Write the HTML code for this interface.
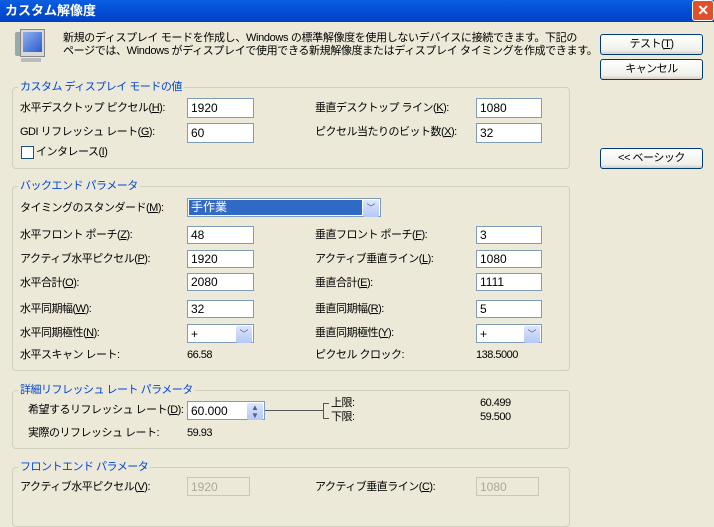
<!DOCTYPE html>
<html><head><meta charset="utf-8"><style>
*{margin:0;padding:0;box-sizing:border-box}
body{width:714px;height:504px;overflow:hidden;background:#ECE9D8;font-family:"Liberation Sans","Noto Sans CJK JP",sans-serif;font-size:11px;letter-spacing:-0.5px;color:#000;position:relative}
.a{position:absolute;white-space:nowrap;line-height:14px}
.tb{position:absolute;left:0;top:0;width:714px;height:22px;background:linear-gradient(#0A5FE0,#0550D8 40%,#0046C8 85%,#0040B8)}
.g{position:absolute;left:12px;width:558px;border:1px solid #D0D0BF;border-radius:4px}
.gt{position:absolute;color:#0046D5;background:#ECE9D8;padding:0 2px;line-height:14px;white-space:nowrap}
.i{position:absolute;background:#fff;border:1px solid #7F9DB9;height:20px;padding:2px 3px;line-height:14px;font-size:12px;letter-spacing:0}
.d{color:#ACA899;border-color:#C9C7BA;background:#ECE9D8}
.b{position:absolute;left:600px;width:103px;height:21px;border:1px solid #003C74;border-radius:3px;background:linear-gradient(#fff,#F0F0EA 80%,#D6D0C5);text-align:center;line-height:19px}
.dd{position:absolute;width:16px;height:17px;top:1px;right:1px;background:linear-gradient(#DCE6FC,#B4C8F6);border-radius:2px;color:#4D6185;font-size:9px;text-align:center;line-height:17px}
</style></head><body>
<div class="tb"></div>
<div class="a" style="left:5px;top:4px;color:#fff;font-weight:bold;font-size:13px;letter-spacing:0">カスタム解像度</div>
<div style="position:absolute;left:692px;top:0;width:22px;height:21px;background:#E0502A;border:1px solid #fff;border-radius:3px;color:#fff;font-weight:bold;text-align:center;line-height:19px;font-size:14px">✕</div>
<div style="position:absolute;left:15px;top:32px;width:8px;height:24px;background:#9AA;border-radius:2px"></div>
<div style="position:absolute;left:20px;top:29px;width:25px;height:28px;background:#D8D8D8;border:1px solid #888"></div>
<div style="position:absolute;left:23px;top:32px;width:19px;height:20px;background:linear-gradient(135deg,#8FB0F0,#2B5CD0)"></div>
<div style="position:absolute;left:21px;top:58px;width:20px;height:4px;background:#BBB"></div>
<div class="a" style="left:63px;top:31px;letter-spacing:-0.35px">新規のディスプレイ モードを作成し、Windows の標準解像度を使用しないデバイスに接続できます。下記の</div>
<div class="a" style="left:63px;top:44px;letter-spacing:-0.35px">ページでは、Windows がディスプレイで使用できる新規解像度またはディスプレイ タイミングを作成できます。</div>
<div class="b" style="top:34px">テスト(<u>T</u>)</div>
<div class="b" style="top:59px">キャンセル</div>
<div class="b" style="top:148px">&lt;&lt; ベーシック</div>

<div class="g" style="top:87px;height:82px"></div>
<div class="gt" style="left:18px;top:80px">カスタム ディスプレイ モードの値</div>
<div class="a" style="left:20px;top:101px">水平デスクトップ ピクセル(<u>H</u>):</div>
<div class="i" style="left:187px;top:98px;width:67px">1920</div>
<div class="a" style="left:315px;top:101px">垂直デスクトップ ライン(<u>K</u>):</div>
<div class="i" style="left:476px;top:98px;width:66px">1080</div>
<div class="a" style="left:20px;top:125px">GDI リフレッシュ レート(<u>G</u>):</div>
<div class="i" style="left:187px;top:123px;width:67px">60</div>
<div class="a" style="left:315px;top:125px">ピクセル当たりのビット数(<u>X</u>):</div>
<div class="i" style="left:476px;top:123px;width:66px">32</div>
<div style="position:absolute;left:21px;top:146px;width:13px;height:13px;border:1px solid #1C5180;background:#fff"></div>
<div class="a" style="left:36px;top:145px">インタレース(<u>I</u>)</div>

<div class="g" style="top:186px;height:185px"></div>
<div class="gt" style="left:18px;top:179px">バックエンド パラメータ</div>
<div class="a" style="left:20px;top:201px">タイミングのスタンダード(<u>M</u>):</div>
<div class="i" style="left:187px;top:198px;width:194px;height:19px;padding:1px"><div style="background:#316AC5;color:#fff;width:173px;height:15px;line-height:15px;padding-left:2px;outline:1px dotted #fff">手作業</div><div class="dd">﹀</div></div>
<div class="a" style="left:20px;top:228px">水平フロント ポーチ(<u>Z</u>):</div>
<div class="i" style="left:187px;top:226px;width:67px;height:18px;padding-top:1px">48</div>
<div class="a" style="left:315px;top:228px">垂直フロント ポーチ(<u>F</u>):</div>
<div class="i" style="left:476px;top:226px;width:66px;height:18px;padding-top:1px">3</div>
<div class="a" style="left:20px;top:252px">アクティブ水平ピクセル(<u>P</u>):</div>
<div class="i" style="left:187px;top:250px;width:67px;height:18px;padding-top:1px">1920</div>
<div class="a" style="left:315px;top:252px">アクティブ垂直ライン(<u>L</u>):</div>
<div class="i" style="left:476px;top:250px;width:66px;height:18px;padding-top:1px">1080</div>
<div class="a" style="left:20px;top:276px">水平合計(<u>O</u>):</div>
<div class="i" style="left:187px;top:273px;width:67px;height:18px;padding-top:1px">2080</div>
<div class="a" style="left:315px;top:276px">垂直合計(<u>E</u>):</div>
<div class="i" style="left:476px;top:273px;width:66px;height:18px;padding-top:1px">1111</div>
<div class="a" style="left:20px;top:302px">水平同期幅(<u>W</u>):</div>
<div class="i" style="left:187px;top:300px;width:67px;height:18px;padding-top:1px">32</div>
<div class="a" style="left:315px;top:302px">垂直同期幅(<u>R</u>):</div>
<div class="i" style="left:476px;top:300px;width:66px;height:18px;padding-top:1px">5</div>
<div class="a" style="left:20px;top:326px">水平同期極性(<u>N</u>):</div>
<div class="i" style="left:187px;top:324px;width:67px;height:19px;padding-top:2px">+<div class="dd">﹀</div></div>
<div class="a" style="left:315px;top:326px">垂直同期極性(<u>Y</u>):</div>
<div class="i" style="left:476px;top:324px;width:66px;height:19px;padding-top:2px">+<div class="dd">﹀</div></div>
<div class="a" style="left:20px;top:348px">水平スキャン レート:</div>
<div class="a" style="left:187px;top:348px">66.58</div>
<div class="a" style="left:315px;top:348px">ピクセル クロック:</div>
<div class="a" style="left:476px;top:348px">138.5000</div>

<div class="g" style="top:390px;height:59px"></div>
<div class="gt" style="left:18px;top:383px">詳細リフレッシュ レート パラメータ</div>
<div class="a" style="left:28px;top:403px">希望するリフレッシュ レート(<u>D</u>):</div>
<div class="i" style="left:187px;top:401px;width:78px;height:19px;padding-top:2px">60.000<div class="dd" style="font-size:8px;line-height:8px;padding-top:1px">▲<br>▼</div></div>
<div style="position:absolute;left:265px;top:410px;width:58px;height:1px;background:#555"></div>
<div style="position:absolute;left:323px;top:403px;width:6px;height:16px;border:1px solid #555;border-right:none"></div>
<div class="a" style="left:331px;top:396px">上限:</div>
<div class="a" style="left:331px;top:410px">下限:</div>
<div class="a" style="left:480px;top:396px">60.499</div>
<div class="a" style="left:480px;top:410px">59.500</div>
<div class="a" style="left:28px;top:426px">実際のリフレッシュ レート:</div>
<div class="a" style="left:187px;top:426px">59.93</div>

<div class="g" style="top:467px;height:60px"></div>
<div class="gt" style="left:18px;top:460px">フロントエンド パラメータ</div>
<div class="a" style="left:20px;top:480px">アクティブ水平ピクセル(<u>V</u>):</div>
<div class="i d" style="left:187px;top:477px;width:63px;height:19px">1920</div>
<div class="a" style="left:315px;top:480px">アクティブ垂直ライン(<u>C</u>):</div>
<div class="i d" style="left:476px;top:477px;width:63px;height:19px">1080</div>
</body></html>
